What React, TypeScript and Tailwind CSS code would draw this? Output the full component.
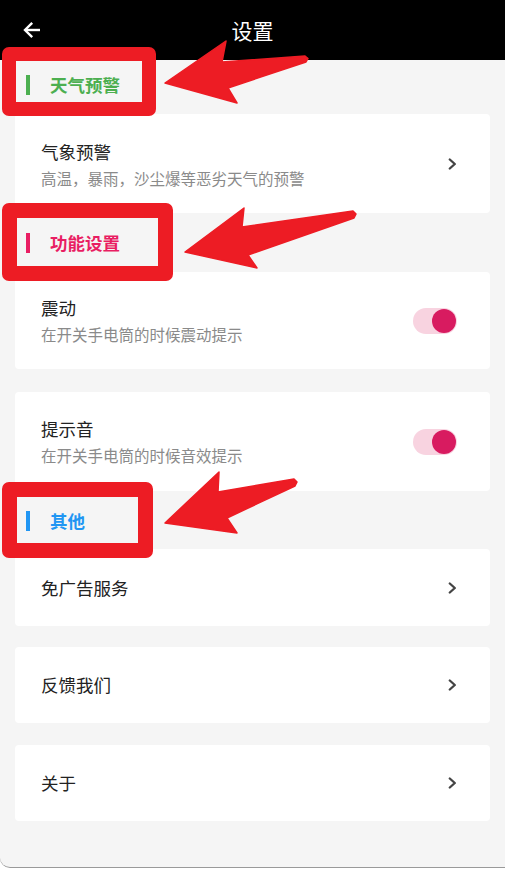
import React from "react";

const FONT = { fontFamily: '"Noto Sans CJK SC", "Noto Sans", sans-serif' };

function Chevron() {
  return (
    <svg width="9" height="12" viewBox="0 0 9 12" className="shrink-0">
      <polyline points="1.8,1.5 6.8,6 1.8,10.5" fill="none" stroke="#444" strokeWidth="2.3" strokeLinecap="round" strokeLinejoin="round" />
    </svg>
  );
}

function Toggle() {
  return (
    <div className="w-[44px] h-[26px] rounded-full bg-[#f8d3e0] flex items-center justify-end pr-px shrink-0">
      <div className="w-[24px] h-[24px] rounded-full bg-[#d81b60]" />
    </div>
  );
}

function Section({ label, bar, text, pt, h }: { label: string; bar: string; text: string; pt: string; h: string }) {
  return (
    <div className={`${h} ${pt} flex items-start pl-[26px]`}>
      <div className="flex items-center h-[22px]">
        <div className={`w-[4px] h-[20px] ${bar}`} />
        <div className={`ml-[20px] text-[17.5px] leading-[22px] font-bold ${text}`}>{label}</div>
      </div>
    </div>
  );
}

function Card({
  title,
  sub,
  right,
  h,
  pt,
}: {
  title: string;
  sub?: string;
  right: React.ReactNode;
  h: string;
  pt: string;
}) {
  return (
    <div className={`mx-[15px] ${h} bg-white rounded-[4px] flex items-center pl-[26px] pr-[33px]`}>
      <div className={`flex-1 self-stretch flex flex-col ${sub ? pt : "justify-center"}`}>
        <div className="text-[17.5px] leading-[24px] text-[#222]">{title}</div>
        {sub && <div className="mt-[3px] text-[15.5px] leading-[22px] text-[#8a8a8a]">{sub}</div>}
      </div>
      {right}
    </div>
  );
}

export default function App() {
  return (
    <div className="relative w-[505px] h-[870px] overflow-hidden bg-white" style={FONT}>
      <div className="h-[868px] bg-[#f5f5f5] border-b border-[#9a9a9a] rounded-bl-[10px] flex flex-col">
        <div className="h-[60px] bg-black grid grid-cols-[60px_1fr_60px] items-center shrink-0">
          <div className="pl-[23px] flex items-center">
            <svg width="18" height="18" viewBox="0 0 18 18">
              <line x1="2" y1="9" x2="17" y2="9" stroke="#fff" strokeWidth="2.4" />
              <polyline points="9.2,1.8 2,9 9.2,16.2" fill="none" stroke="#fff" strokeWidth="2.4" />
            </svg>
          </div>
          <div className="text-center text-white text-[21px] leading-[28px]">设置</div>
          <div />
        </div>

        <Section label="天气预警" bar="bg-[#4caf50]" text="text-[#4caf50]" h="h-[54px]" pt="pt-[14px]" />
        <Card
          title="气象预警"
          sub="高温，暴雨，沙尘爆等恶劣天气的预警"
          right={<Chevron />}
          h="h-[99px]"
          pt="pt-[26px]"
        />
        <Section label="功能设置" bar="bg-[#e91e63]" text="text-[#e91e63]" h="h-[59px]" pt="pt-[19px]" />
        <Card title="震动" sub="在开关手电筒的时候震动提示" right={<Toggle />} h="h-[97px]" pt="pt-[24px]" />
        <div className="h-[23px]" />
        <Card title="提示音" sub="在开关手电筒的时候音效提示" right={<Toggle />} h="h-[99px]" pt="pt-[25px]" />
        <Section label="其他" bar="bg-[#2196f3]" text="text-[#2196f3]" h="h-[58px]" pt="pt-[19px]" />
        <Card title="免广告服务" right={<Chevron />} h="h-[77px]" pt="" />
        <div className="h-[21px]" />
        <Card title="反馈我们" right={<Chevron />} h="h-[76px]" pt="" />
        <div className="h-[22px]" />
        <Card title="关于" right={<Chevron />} h="h-[76px]" pt="" />
      </div>

      {/* annotation boxes */}
      <div className="absolute left-[2px] top-[47px] w-[154px] h-[69px] border-[14px] border-[#ed1c24] rounded-[7px] pointer-events-none" />
      <div className="absolute left-[2px] top-[203px] w-[171px] h-[78px] border-[15px] border-[#ed1c24] rounded-[7px] pointer-events-none" />
      <div className="absolute left-[2px] top-[482px] w-[151px] h-[76px] border-[15px] border-[#ed1c24] rounded-[7px] pointer-events-none" />

      {/* annotation arrows */}
      <svg className="absolute left-0 top-0 pointer-events-none" width="505" height="870" viewBox="0 0 505 870">
        <g fill="#ed1c24" stroke="#ed1c24" strokeWidth="1.5" strokeLinejoin="round">
          <polygon points="165,83 226,41 222,62 305,56 308,58.5 306,62 228,88 237,103" />
          <polygon points="185,252 244,208 242,227 353,211 356,214 354,218 248,255 257,268" />
          <polygon points="165,523 219,472 218,492 294,479 297,482 295,486 227,518 237,533" />
        </g>
      </svg>
    </div>
  );
}
